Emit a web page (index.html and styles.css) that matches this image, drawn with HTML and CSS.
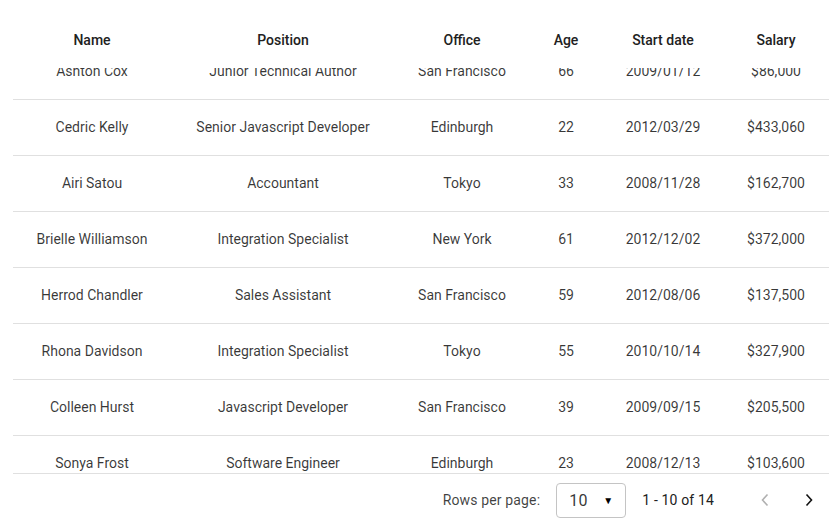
FILE: index.html
```html
<!DOCTYPE html>
<html lang="en">
<head>
<meta charset="utf-8">
<title>Employees</title>
<link rel="stylesheet" href="styles.css">
</head>
<body>
<div class="card">
  <div class="scroll" id="scroll">
    <table class="grid">
      <colgroup>
        <col class="c-name"><col class="c-pos"><col class="c-office"><col class="c-age"><col class="c-date"><col class="c-salary">
      </colgroup>
      <thead>
        <tr><th>Name</th><th>Position</th><th>Office</th><th>Age</th><th>Start date</th><th>Salary</th></tr>
      </thead>
      <tbody>
        <tr><td>Tiger Nixon</td><td>System Architect</td><td>Edinburgh</td><td>61</td><td>2011/04/25</td><td>$320,800</td></tr>
        <tr><td>Garrett Winters</td><td>Accountant</td><td>Tokyo</td><td>63</td><td>2011/07/25</td><td>$170,750</td></tr>
        <tr><td>Ashton Cox</td><td>Junior Technical Author</td><td>San Francisco</td><td>66</td><td>2009/01/12</td><td>$86,000</td></tr>
        <tr><td>Cedric Kelly</td><td>Senior Javascript Developer</td><td>Edinburgh</td><td>22</td><td>2012/03/29</td><td>$433,060</td></tr>
        <tr><td>Airi Satou</td><td>Accountant</td><td>Tokyo</td><td>33</td><td>2008/11/28</td><td>$162,700</td></tr>
        <tr><td>Brielle Williamson</td><td>Integration Specialist</td><td>New York</td><td>61</td><td>2012/12/02</td><td>$372,000</td></tr>
        <tr><td>Herrod Chandler</td><td>Sales Assistant</td><td>San Francisco</td><td>59</td><td>2012/08/06</td><td>$137,500</td></tr>
        <tr><td>Rhona Davidson</td><td>Integration Specialist</td><td>Tokyo</td><td>55</td><td>2010/10/14</td><td>$327,900</td></tr>
        <tr><td>Colleen Hurst</td><td>Javascript Developer</td><td>San Francisco</td><td>39</td><td>2009/09/15</td><td>$205,500</td></tr>
        <tr><td>Sonya Frost</td><td>Software Engineer</td><td>Edinburgh</td><td>23</td><td>2008/12/13</td><td>$103,600</td></tr>
      </tbody>
    </table>
  </div>
  <div class="pager">
    <span class="pager-label">Rows per page:</span>
    <div class="select"><span class="select-value">10</span><span class="select-caret">&#9660;</span></div>
    <span class="pager-range">1 - 10 of 14</span>
    <div class="pager-nav">
      <button class="nav-btn is-disabled" aria-label="Previous page">
        <svg width="10" height="14" viewBox="0 0 10 14"><path d="M7.5 1.5 L2.5 7 L7.5 12.5" fill="none" stroke="currentColor" stroke-width="1.6"/></svg>
      </button>
      <button class="nav-btn" aria-label="Next page">
        <svg width="10" height="14" viewBox="0 0 10 14"><path d="M2.5 1.5 L7.5 7 L2.5 12.5" fill="none" stroke="currentColor" stroke-width="1.6"/></svg>
      </button>
    </div>
  </div>
</div>
<script src="script.js"></script>
</body>
</html>
```
FILE: styles.css
```css
html, body {
  margin: 0;
  padding: 0;
  background: #fff;
}
body {
  font-family: Roboto, "Liberation Sans", sans-serif;
  font-size: 14px;
  color: rgba(0, 0, 0, 0.78);
}
.card {
  margin: 12px 11px 0 13px;
}
.scroll {
  height: 461px;
  overflow: auto;
  border-bottom: 1px solid #e0e0e0;
  scrollbar-width: none;
}
.scroll::-webkit-scrollbar { display: none; }
.grid {
  width: 100%;
  table-layout: fixed;
  border-collapse: separate;
  border-spacing: 0;
}
.c-name { width: 158px; }
.c-pos { width: 224px; }
.c-office { width: 134px; }
.c-age { width: 74px; }
.c-date { width: 120px; }
.c-salary { width: 106px; }
.grid th {
  position: sticky;
  top: 0;
  z-index: 1;
  background: #fff;
  height: 56px;
  padding: 0 8px;
  font-weight: 500;
  color: #212121;
  text-align: center;
  white-space: nowrap;
}
.grid td {
  height: 53px;
  padding: 0 8px 2px;
  border-bottom: 1px solid #e0e0e0;
  text-align: center;
  white-space: nowrap;
}
.pager {
  height: 52px;
  display: flex;
  align-items: center;
  justify-content: flex-end;
  letter-spacing: 0.15px;
}
.pager-label {
  color: rgba(0, 0, 0, 0.75);
  margin-right: 16px;
}
.select {
  width: 70px;
  height: 35px;
  box-sizing: border-box;
  border: 1px solid #c4c4c4;
  border-radius: 4px;
  display: flex;
  align-items: center;
  justify-content: space-between;
  padding: 0 12px 0 12px;
  margin-right: 16px;
}
.select-value {
  font-size: 16px;
  color: rgba(0, 0, 0, 0.8);
}
.select-caret {
  font-size: 10px;
  color: #000;
}
.pager-range {
  color: #212121;
  margin-right: 31px;
}
.pager-nav {
  display: flex;
  gap: 4px;
}
.nav-btn {
  width: 40px;
  height: 40px;
  border: 0;
  background: transparent;
  padding: 0;
  display: flex;
  align-items: center;
  justify-content: center;
  color: #111;
}
.nav-btn.is-disabled { color: #b0b0b0; }
```
FILE: script.js
```js
document.getElementById('scroll').scrollTop = 136;
```
